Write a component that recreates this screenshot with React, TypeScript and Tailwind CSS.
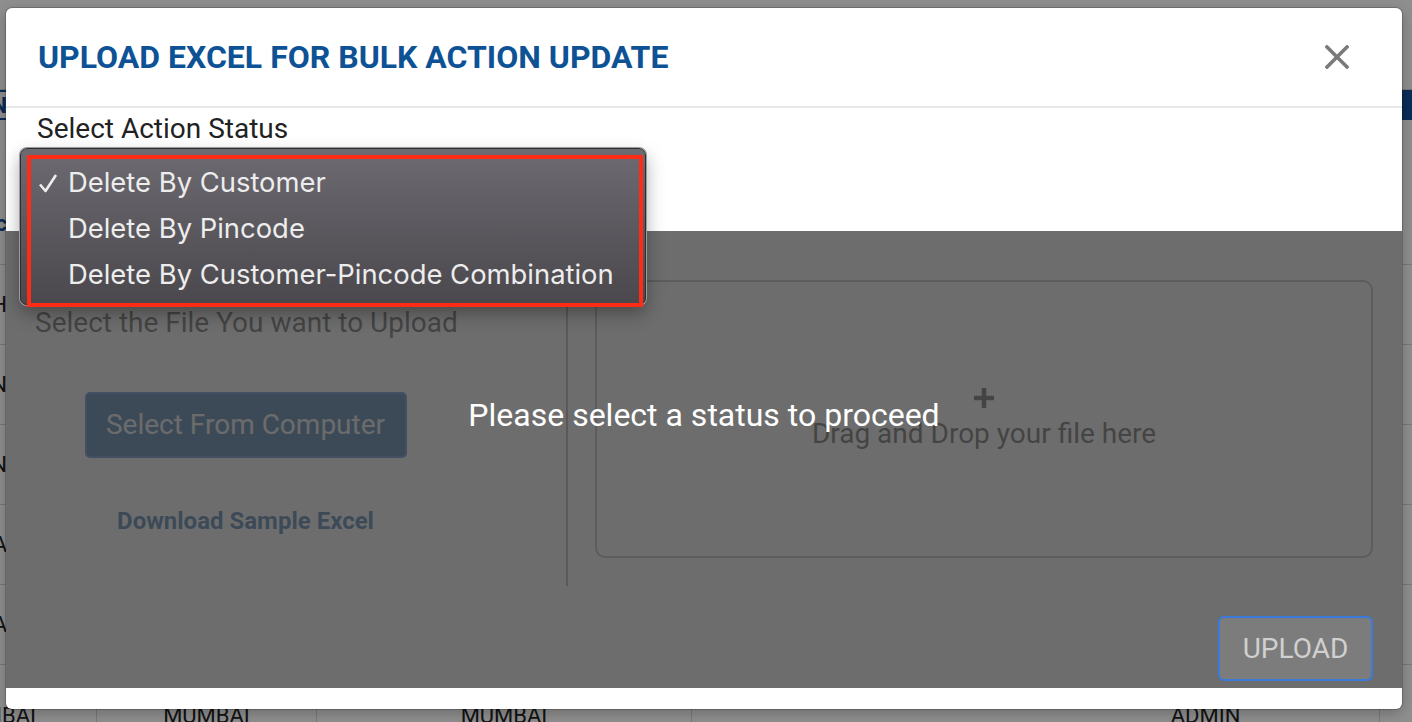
import React from 'react';

const menuItems = [
  { label: 'Delete By Customer', checked: true },
  { label: 'Delete By Pincode', checked: false },
  { label: 'Delete By Customer-Pincode Combination', checked: false },
];

const EdgeCell: React.FC<{ text: string; className?: string }> = ({ text, className }) => (
  <div className="flex w-[7px] shrink-0 justify-end overflow-hidden">
    <span className={`whitespace-nowrap ${className ?? ''}`}>{text}</span>
  </div>
);

const BackgroundPage: React.FC = () => (
  <div className="flex flex-col text-[22px] text-[#222]">
    <div className="h-[90px] border-b border-[#d8d8d8]" />
    <div className="flex h-[30px] items-center border-y-2 border-[#14509a]">
      <EdgeCell text="NAMN" className="font-bold text-[#14509a]" />
      <div className="ml-auto flex h-full w-[40px] items-center bg-[#14509a] pl-[12px] font-bold text-white">N</div>
    </div>
    <div className="flex h-[145px] items-end border-b border-[#d8d8d8] pb-[24px]">
      <EdgeCell text="Soc" className="font-bold text-[#14509a]" />
    </div>
    {['BH', 'MUMBAIN', 'CHENN', 'KOLKA', 'BARODA'].map((t) => (
      <div key={t} className="flex h-[80px] items-center border-b border-[#d8d8d8]">
        <EdgeCell text={t} />
      </div>
    ))}
    <div className="flex h-[80px] items-start pt-[34px]">
      <div className="w-[97px] shrink-0 border-r border-[#d8d8d8] text-right">
        <span className="relative -left-[60px]">MUMBAI</span>
      </div>
      <div className="w-[220px] shrink-0 border-r border-[#d8d8d8] text-center">MUMBAI</div>
      <div className="w-[375px] shrink-0 border-r border-[#d8d8d8] text-center">MUMBAI</div>
      <div className="w-[340px] shrink-0 border-r border-[#d8d8d8]" />
      <div className="w-[348px] shrink-0 border-r border-[#d8d8d8] text-center">ADMIN</div>
    </div>
  </div>
);

const CloseIcon: React.FC = () => (
  <svg width="24" height="24" viewBox="0 0 24 24" className="shrink-0">
    <path d="M2 2 L22 22 M22 2 L2 22" stroke="#7a7a7a" strokeWidth="3.6" strokeLinecap="square" />
  </svg>
);

const CheckIcon: React.FC = () => (
  <svg width="20" height="20" viewBox="0 0 20 20">
    <path d="M2 11.5 L7.5 18 L18 2" fill="none" stroke="#ededed" strokeWidth="2.6" strokeLinejoin="round" />
  </svg>
);

const UploadModal: React.FC = () => (
  <div className="absolute left-[6px] top-[8px] flex h-[701px] w-[1396px] flex-col overflow-hidden rounded-[6px] bg-white shadow-[0_0_0_1px_rgba(0,0,0,0.18),0_4px_14px_rgba(0,0,0,0.25)]">
    {/* Header */}
    <div className="flex h-[100px] shrink-0 items-center justify-between border-b-2 border-[#e8e8e8] pl-[32px] pr-[53px]">
      <h2 className="text-[32px] font-bold text-[#0e5296]">UPLOAD EXCEL FOR BULK ACTION UPDATE</h2>
      <CloseIcon />
    </div>

    {/* Status select */}
    <div className="h-[123px] shrink-0 px-[31px] pt-[4px]">
      <p className="text-[28px] leading-[34px] text-[#222]">Select Action Status</p>
    </div>

    {/* Upload area, blocked until a status is picked */}
    <div className="relative flex flex-1 pl-[29px] pr-[29px]">
      <div className="flex w-[421px] shrink-0 flex-col items-center pt-[74px]">
        <p className="self-start whitespace-nowrap text-[28px] leading-[36px] text-[#333]">
          Select the File You want to Upload
        </p>
        <button className="mt-[51px] h-[66px] w-[322px] rounded-[5px] border-2 border-[#2f6ed0] bg-[#0e5296] text-[28px] text-[#f2f2f2]">
          Select From Computer
        </button>
        <a className="mt-[48px] text-[24px] font-bold leading-[30px] text-[#0e5296]">Download Sample Excel</a>
      </div>

      <div className="ml-[110px] mt-[29px] h-[326px] w-[2px] shrink-0 bg-[#999]" />

      <div className="ml-[27px] flex flex-1 flex-col">
        <div className="mt-[49px] flex h-[278px] flex-col items-center justify-center rounded-[10px] border-2 border-[#aaa]">
          <svg width="22" height="22" viewBox="0 0 22 22">
            <path d="M11 1 V21 M1 11 H21" stroke="#333" strokeWidth="4.5" />
          </svg>
          <p className="mt-[8px] text-[28px] leading-[34px] text-[#333]">Drag and Drop your file here</p>
        </div>
        <button className="relative z-10 ml-auto mt-[58px] h-[65px] w-[155px] rounded-[6px] border-2 border-[#3a7ad8] bg-white/10 text-[28px] text-[#d0d0d0]">
          UPLOAD
        </button>
      </div>

      <div className="absolute inset-0 bg-[rgba(72,72,72,0.8)]" />
      <p className="absolute inset-x-0 top-[165px] z-10 text-center text-[32px] leading-[38px] text-white">
        Please select a status to proceed
      </p>
    </div>

    <div className="h-[21px] shrink-0" />
  </div>
);

const StatusMenu: React.FC = () => (
  <>
    <div className="absolute left-[20px] top-[148px] h-[157px] w-[626px] rounded-[7px] border border-[#2e2d30] bg-gradient-to-b from-[#6d6b71] to-[#4a484d] pt-[11px] font-['Inter',sans-serif] shadow-[0_0_0_1px_#9c9c9c,0_8px_18px_rgba(0,0,0,0.35)]">
      {menuItems.map((item) => (
        <div key={item.label} className="flex h-[46px] items-center text-[27.4px] text-[#ededed]">
          <span className="flex w-[47px] pl-[17px]">{item.checked ? <CheckIcon /> : null}</span>
          <span>{item.label}</span>
        </div>
      ))}
    </div>
    <div className="absolute left-[27px] top-[155px] h-[152px] w-[616px] border-4 border-[#ff2b14]" />
  </>
);

export default function App() {
  return (
    <div className="relative h-[722px] w-[1412px] overflow-hidden bg-white font-['Roboto',sans-serif]">
      <BackgroundPage />
      <div className="absolute inset-0 bg-black/[0.44]" />
      <UploadModal />
      <StatusMenu />
    </div>
  );
}
